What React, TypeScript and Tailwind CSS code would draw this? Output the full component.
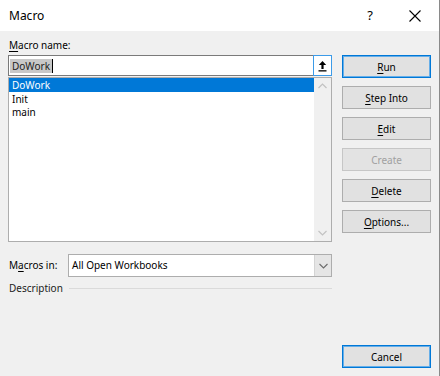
import React from "react";

const font = { fontFamily: '"Noto Sans", "Segoe UI", Arial, sans-serif' };

function Btn({
  children,
  primary,
  disabled,
}: {
  children: React.ReactNode;
  primary?: boolean;
  disabled?: boolean;
}) {
  const base =
    "w-[89px] h-[23px] flex items-center justify-center text-[10px] leading-none ";
  if (primary)
    return (
      <div className={base + "bg-[#e1e1e1] border border-[#0078d7] shadow-[inset_0_0_0_1px_#66aee8] text-black"}>
        {children}
      </div>
    );
  if (disabled)
    return (
      <div className={base + "bg-[#e3e3e3] border border-[#c6c6c6] text-[#a0a0a0]"}>
        {children}
      </div>
    );
  return (
    <div className={base + "bg-[#e1e1e1] border border-[#adadad] text-black"}>{children}</div>
  );
}

function U({ children }: { children: React.ReactNode }) {
  return <span className="underline underline-offset-[2px] decoration-[1px]">{children}</span>;
}

export default function App() {
  return (
    <div
      style={font}
      className="w-[440px] h-[376px] bg-[#f0f0f0] border-r border-[#8a8a8a] flex flex-col text-black overflow-hidden"
    >
      {/* Title bar */}
      <div className="h-[31px] bg-white flex items-center shrink-0">
        <div className="pl-[9px] text-[12px] flex-1 pt-[1px]">Macro</div>
        <div className="w-[20px] text-[13px] text-center mr-[26px]">?</div>
        <div className="w-[18px] mr-[15px] flex items-center justify-center">
          <svg width="12" height="12" viewBox="0 0 12 12">
            <path d="M0.5 0.5 L11.5 11.5 M11.5 0.5 L0.5 11.5" stroke="#000" strokeWidth="1.1" />
          </svg>
        </div>
      </div>

      {/* Body */}
      <div className="flex-1 flex">
        {/* Left column */}
        <div className="ml-[8px] w-[324px] flex flex-col pt-[7px]">
          <div className="h-[17px] text-[10px] pl-[1px] leading-[14px]">
            <U>M</U>acro name:
          </div>
          {/* Input */}
          <div className="h-[21px] bg-white border border-[#7a7a7a] flex items-center relative">
            <div className="flex items-center flex-1 pl-[1px]">
              <span className="bg-[#c8c8c8] text-[10px] leading-[14px] px-[2px] text-[#222]">DoWork</span>
              <span className="w-[1px] h-[14px] bg-black"></span>
            </div>
            <div className="w-[19px] h-[21px] -mr-[1px] border border-[#3c9be8] bg-white flex items-center justify-center">
              <svg width="9" height="12" viewBox="0 0 9 12">
                <path d="M4.5 1 L8.2 5 L5.6 5 L5.6 9 L3.4 9 L3.4 5 L0.8 5 Z" fill="#000" />
                <rect x="0.5" y="10.2" width="8" height="1.3" fill="#000" />
              </svg>
            </div>
          </div>
          {/* List */}
          <div className="mt-[1px] h-[165px] bg-white border border-[#adadad] flex">
            <div className="flex-1 flex flex-col text-[10px]">
              <div className="h-[14px] bg-[#0078d7] text-white pl-[3px] leading-[14px]">DoWork</div>
              <div className="h-[13px] pl-[3px] leading-[13px] mt-[1px]">Init</div>
              <div className="h-[13px] pl-[3px] leading-[13px]">main</div>
            </div>
            <div className="w-[17px] bg-[#f0f0f0] flex flex-col justify-between items-center py-[5px]">
              <svg width="9" height="6" viewBox="0 0 9 6">
                <path d="M0.5 5 L4.5 1 L8.5 5" stroke="#c2c2c2" strokeWidth="1.2" fill="none" />
              </svg>
              <svg width="9" height="6" viewBox="0 0 9 6">
                <path d="M0.5 1 L4.5 5 L8.5 1" stroke="#c2c2c2" strokeWidth="1.2" fill="none" />
              </svg>
            </div>
          </div>
          {/* Macros in */}
          <div className="mt-[12px] flex items-center h-[23px]">
            <div className="w-[60px] text-[10px] pl-[1px]">
              M<U>a</U>cros in:
            </div>
            <div className="flex-1 h-[23px] bg-white border border-[#adadad] flex items-center">
              <div className="flex-1 text-[10px] pl-[3px]">All Open Workbooks</div>
              <div className="w-[17px] h-[21px] bg-[#e5e5e5] border-l border-[#d4d4d4] flex items-center justify-center">
                <svg width="9" height="6" viewBox="0 0 9 6">
                  <path d="M0.5 1 L4.5 5 L8.5 1" stroke="#6b6b6b" strokeWidth="1.1" fill="none" />
                </svg>
              </div>
            </div>
          </div>
          {/* Description */}
          <div className="mt-[4px] flex items-center h-[14px]">
            <div className="text-[10px] pl-[1px] pr-[6px] text-[#222]">Description</div>
            <div className="flex-1 h-[1px] bg-[#dadada]"></div>
          </div>
        </div>

        {/* Right column */}
        <div className="ml-[10px] flex flex-col pt-[24px] pb-[8px]">
          <div className="flex flex-col gap-[8px]">
            <Btn primary>
              <U>R</U>un
            </Btn>
            <Btn>
              <U>S</U>tep Into
            </Btn>
            <Btn>
              <U>E</U>dit
            </Btn>
            <Btn disabled>Create</Btn>
            <Btn>
              <U>D</U>elete
            </Btn>
            <Btn>
              <U>O</U>ptions...
            </Btn>
          </div>
          <div className="flex-1"></div>
          <Btn primary>Cancel</Btn>
        </div>
      </div>
    </div>
  );
}
